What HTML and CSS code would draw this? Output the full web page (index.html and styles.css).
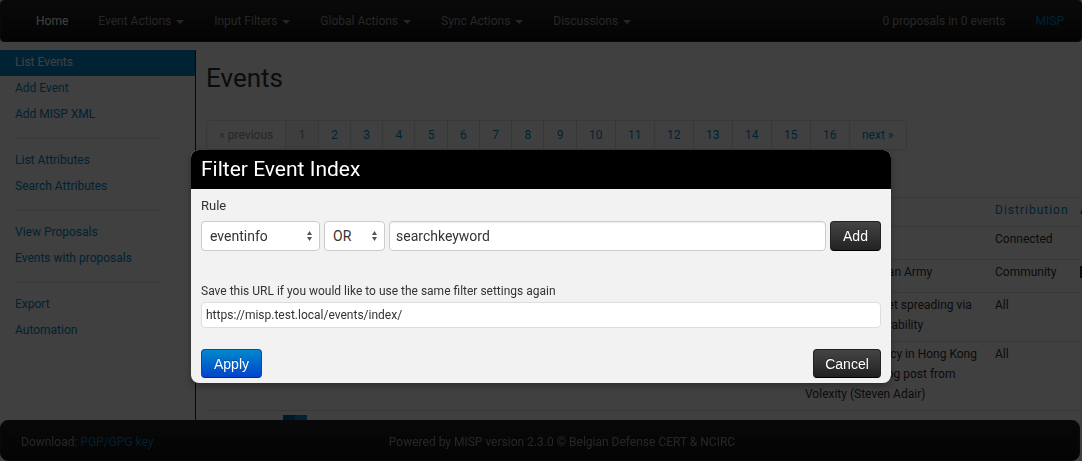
FILE: index.html
```html
<!DOCTYPE html>
<html lang="en">
<head>
<meta charset="utf-8">
<title>Events - MISP</title>
<link rel="stylesheet" href="styles.css">
</head>
<body>
<div class="navbar">
  <ul class="nav">
    <li><a class="nav-home">Home</a></li>
    <li><a>Event Actions <b class="caret"></b></a></li>
    <li><a>Input Filters <b class="caret"></b></a></li>
    <li><a>Global Actions <b class="caret"></b></a></li>
    <li><a>Sync Actions <b class="caret"></b></a></li>
    <li><a>Discussions <b class="caret"></b></a></li>
  </ul>
  <ul class="nav">
    <li><a>0 proposals in 0 events</a></li>
    <li><a class="brand">MISP</a></li>
  </ul>
</div>

<div class="main">
  <div class="sidebar">
    <ul class="side-nav">
      <li class="active"><a>List Events</a></li>
      <li><a>Add Event</a></li>
      <li><a>Add MISP XML</a></li>
      <li class="divider"></li>
      <li><a>List Attributes</a></li>
      <li><a>Search Attributes</a></li>
      <li class="divider"></li>
      <li><a>View Proposals</a></li>
      <li><a>Events with proposals</a></li>
      <li class="divider"></li>
      <li><a>Export</a></li>
      <li><a>Automation</a></li>
    </ul>
  </div>

  <div class="content">
    <h2 class="page-title">Events</h2>
    <ul class="pagination">
      <li class="disabled"><a>&laquo; previous</a></li>
      <li class="current"><a>1</a></li>
      <li><a>2</a></li>
      <li><a>3</a></li>
      <li><a>4</a></li>
      <li><a>5</a></li>
      <li><a>6</a></li>
      <li><a>7</a></li>
      <li><a>8</a></li>
      <li><a>9</a></li>
      <li><a>10</a></li>
      <li><a>11</a></li>
      <li><a>12</a></li>
      <li><a>13</a></li>
      <li><a>14</a></li>
      <li><a>15</a></li>
      <li><a>16</a></li>
      <li><a>next &raquo;</a></li>
    </ul>

    <table class="events">
      <colgroup>
        <col class="c-pub"><col class="c-org"><col class="c-owner"><col class="c-id"><col class="c-tags">
        <col class="c-attr"><col class="c-email"><col class="c-date"><col class="c-threat">
        <col class="c-info"><col class="c-dist"><col class="c-actions">
      </colgroup>
      <thead>
        <tr>
          <th><a>Valid.</a></th>
          <th><a>Org</a></th>
          <th><a>Owner</a></th>
          <th><a>Id</a></th>
          <th>Tags</th>
          <th>#</th>
          <th><a>Email</a></th>
          <th><a>Date</a></th>
          <th><a>Threat</a></th>
          <th class="info"><a>Info</a></th>
          <th><a>Distribution</a></th>
          <th>Actions</th>
        </tr>
      </thead>
      <tbody>
        <tr>
          <td>&#10003;</td><td>ORG</td><td>ORG</td><td>4</td><td><div class="tagbox"></div></td>
          <td>12</td><td>admin</td><td>2014-10-02</td><td>High</td>
          <td class="info">Test event</td><td>Connected</td><td></td>
        </tr>
        <tr>
          <td>&#10003;</td><td>ORG</td><td>ORG</td><td>3</td><td><div class="tagbox"></div></td>
          <td>8</td><td>admin</td><td>2014-09-30</td><td>Low</td>
          <td class="info">OSINT Free Syrian Army</td><td>Community</td><td><span class="act-icon"></span></td>
        </tr>
        <tr>
          <td>&#10003;</td><td>ORG</td><td>ORG</td><td>2</td><td></td>
          <td>21</td><td>admin</td><td>2014-09-29</td><td>High</td>
          <td class="info">OSINT IRC botnet spreading via Bashdoor vulnerability</td><td>All</td><td></td>
        </tr>
        <tr>
          <td>&#10003;</td><td>ORG</td><td>ORG</td><td>1</td><td></td>
          <td>15</td><td>admin</td><td>2014-09-26</td><td>Medium</td>
          <td class="info">OSINT Democracy in Hong Kong Under Attack blog post from Volexity (Steven Adair)</td><td>All</td><td></td>
        </tr>
        <tr>
          <td></td><td><span class="org-logo"></span></td><td></td><td></td><td></td>
          <td></td><td></td><td></td><td></td>
          <td class="info"></td><td></td><td></td>
        </tr>
      </tbody>
    </table>
  </div>
</div>

<div class="footer">
  <div class="footer-left">Download: <a>PGP/GPG key</a></div>
  <div class="footer-center">Powered by MISP version 2.3.0 &copy; Belgian Defense CERT &amp; NCIRC</div>
  <div class="footer-right"></div>
</div>

<div class="backdrop"></div>

<div class="modal">
  <div class="modal-header">Filter Event Index</div>
  <div class="modal-body">
    <div class="rule-label">Rule</div>
    <div class="rule-row">
      <div class="select select-field">
        <span>eventinfo</span>
        <svg class="arrows" width="5" height="10" viewBox="0 0 5 10"><path d="M2.5 0 L5 4 L0 4 Z M0 6 L5 6 L2.5 10 Z" fill="#555"/></svg>
      </div>
      <div class="select select-op">
        <span>OR</span>
        <svg class="arrows" width="5" height="10" viewBox="0 0 5 10"><path d="M2.5 0 L5 4 L0 4 Z M0 6 L5 6 L2.5 10 Z" fill="#555"/></svg>
      </div>
      <div class="text-input">searchkeyword</div>
      <button class="btn btn-inverse btn-add">Add</button>
    </div>
    <div class="url-label">Save this URL if you would like to use the same filter settings again</div>
    <div class="url-input">https://misp.test.local/events/index/</div>
    <div class="modal-actions">
      <button class="btn btn-primary btn-apply">Apply</button>
      <button class="btn btn-inverse btn-cancel">Cancel</button>
    </div>
  </div>
</div>
</body>
</html>
```
FILE: styles.css
```css
* { box-sizing: border-box; }

html, body {
  margin: 0;
  padding: 0;
}

body {
  width: 1082px;
  height: 461px;
  overflow: hidden;
  font-family: Roboto, "Liberation Sans", sans-serif;
  font-size: 12px;
  line-height: 20px;
  color: #333;
  background: #fff;
}

a { color: #0088cc; text-decoration: none; }
ul { list-style: none; margin: 0; padding: 0; }

/* ---------- navbar ---------- */
.navbar {
  height: 42px;
  display: flex;
  justify-content: space-between;
  padding: 0 2px 0 20px;
  background: linear-gradient(#262626, #111);
  border: 1px solid #252525;
  border-radius: 4px;
}

.nav { display: flex; }

.nav a {
  display: block;
  padding: 10px 15px;
  line-height: 20px;
  font-size: 12px;
  color: #999;
}

.nav a.nav-home { color: #fff; }
.nav a.brand { color: #0088cc; }

.caret {
  display: inline-block;
  width: 0;
  height: 0;
  vertical-align: top;
  margin-top: 9px;
  margin-left: 2px;
  border-top: 4px solid #999;
  border-left: 4px solid transparent;
  border-right: 4px solid transparent;
}

/* ---------- layout ---------- */
.main {
  display: flex;
  margin-top: 8px;
  height: 420px;
}

.sidebar {
  width: 196px;
  flex: none;
  border-right: 1px solid #222;
}

.side-nav a {
  display: block;
  padding: 2px 15px 4px;
  line-height: 20px;
  color: #0088cc;
}

.side-nav .active a {
  background: #0088cc;
  color: #fff;
}

.side-nav .divider {
  height: 1px;
  margin: 10px 32px 9px 15px;
  background: #e5e5e5;
}

.content {
  flex: 1;
  min-width: 0;
  overflow: hidden;
  padding: 8px 0 0 10px;
}

.page-title {
  margin: 0;
  font-size: 26px;
  line-height: 40px;
  font-weight: normal;
  color: #333;
}

/* ---------- pagination ---------- */
.pagination {
  display: flex;
  width: max-content;
  margin-top: 22px;
  border: 1px solid #ddd;
  border-radius: 4px;
  box-shadow: 0 1px 2px rgba(0,0,0,0.05);
  overflow: hidden;
}

.pagination li + li a { border-left: 1px solid #ddd; }

.pagination a {
  display: block;
  padding: 4px 12.25px;
  line-height: 20px;
  background: #fff;
  color: #0088cc;
}

.pagination .disabled a { color: #999; }
.pagination .current a { color: #999; background: #f5f5f5; }

/* ---------- table ---------- */
.events {
  margin-top: 47px;
  width: 986px;
  table-layout: fixed;
  border-collapse: collapse;
}

.c-pub { width: 69px; }
.c-org { width: 70px; }
.c-owner { width: 80px; }
.c-id { width: 40px; }
.c-tags { width: 100px; }
.c-attr { width: 40px; }
.c-email { width: 70px; }
.c-date { width: 70px; }
.c-threat { width: 52px; }
.c-info { width: 190px; }
.c-dist { width: 85px; }
.c-actions { width: 120px; }

.events th,
.events td {
  padding: 2px 8px 6px;
  border-top: 1px solid #ddd;
  text-align: left;
  vertical-align: top;
  line-height: 20px;
  white-space: nowrap;
  overflow: hidden;
}

.events td.info,
.events th.info {
  padding-right: 4px;
  white-space: normal;
}

.events th { font-weight: normal; color: #333; }
.events th a { letter-spacing: 1px; }

.tagbox { height: 24px; }

.act-icon {
  display: inline-block;
  width: 3px;
  height: 12px;
  margin-top: 4px;
  background: #333;
}

.org-logo {
  display: block;
  width: 24px;
  height: 16px;
  margin-top: 2px;
  background: linear-gradient(to right, #00609a 50%, #0a8ad0 50%);
}

/* ---------- footer ---------- */
.footer {
  position: fixed;
  left: 0;
  right: 2px;
  bottom: 0;
  height: 41px;
  display: flex;
  align-items: center;
  padding-top: 3px;
  background: linear-gradient(#222, #111);
  border: 1px solid #252525;
  border-radius: 8px;
  color: #999;
  z-index: 10;
}

.footer-left { width: 200px; padding-left: 20px; }
.footer-center { flex: 1; text-align: center; }
.footer-right { width: 156px; }

/* ---------- modal ---------- */
.backdrop {
  position: fixed;
  inset: 0;
  background: #000;
  opacity: 0.75;
  z-index: 100;
}

.modal {
  position: absolute;
  left: 191px;
  top: 150px;
  width: 700px;
  z-index: 101;
  background: #f2f2f2;
  border-radius: 8px;
  overflow: hidden;
  box-shadow: 0 3px 7px rgba(0,0,0,0.3);
}

.modal-header {
  height: 39px;
  padding: 0 10px;
  background: #000;
  color: #fff;
  font-size: 21px;
  line-height: 39px;
}

.modal-body {
  padding: 7px 10px 5px;
}

.rule-label {
  font-size: 13px;
  line-height: 20px;
  color: #333;
}

.rule-row {
  display: flex;
  gap: 4px;
  margin-top: 5px;
  height: 30px;
}

.select {
  display: flex;
  align-items: center;
  justify-content: space-between;
  height: 30px;
  padding: 0 7px 0 8px;
  background: #fff;
  border: 1px solid #ccc;
  border-radius: 4px;
  font-size: 14px;
  color: #333;
}

.select-field { width: 119px; }
.select-op { width: 61px; }

.text-input {
  flex: 1;
  height: 30px;
  padding: 0 6px;
  background: #fff;
  border: 1px solid #ccc;
  border-radius: 4px;
  box-shadow: inset 0 1px 1px rgba(0,0,0,0.075);
  font-size: 14px;
  line-height: 28px;
  color: #333;
}

.btn {
  height: 30px;
  padding: 0;
  border-radius: 4px;
  font-family: "Liberation Sans", Arial, sans-serif;
  font-size: 14px;
  color: #fff;
  text-align: center;
  text-shadow: 0 -1px 0 rgba(0,0,0,0.25);
  cursor: pointer;
}

.btn-inverse {
  background: linear-gradient(#444, #222);
  border: 1px solid #222;
  border-bottom-color: #000;
}

.btn-primary {
  background: linear-gradient(#0088cc, #0044cc);
  border: 1px solid #0044cc;
  border-bottom-color: #002a80;
}

.btn-add { width: 51px; }

.url-label {
  margin-top: 32px;
  font-size: 12px;
  line-height: 16px;
  color: #333;
}

.url-input {
  margin-top: 3px;
  height: 26px;
  padding: 0 4px;
  background: #fff;
  border: 1px solid #ddd;
  border-radius: 4px;
  font-size: 12px;
  line-height: 24px;
  color: #333;
}

.modal-actions {
  display: flex;
  justify-content: space-between;
  margin-top: 21px;
}

.btn-apply { width: 61px; height: 29px; }
.btn-cancel { width: 68px; height: 29px; }
```
